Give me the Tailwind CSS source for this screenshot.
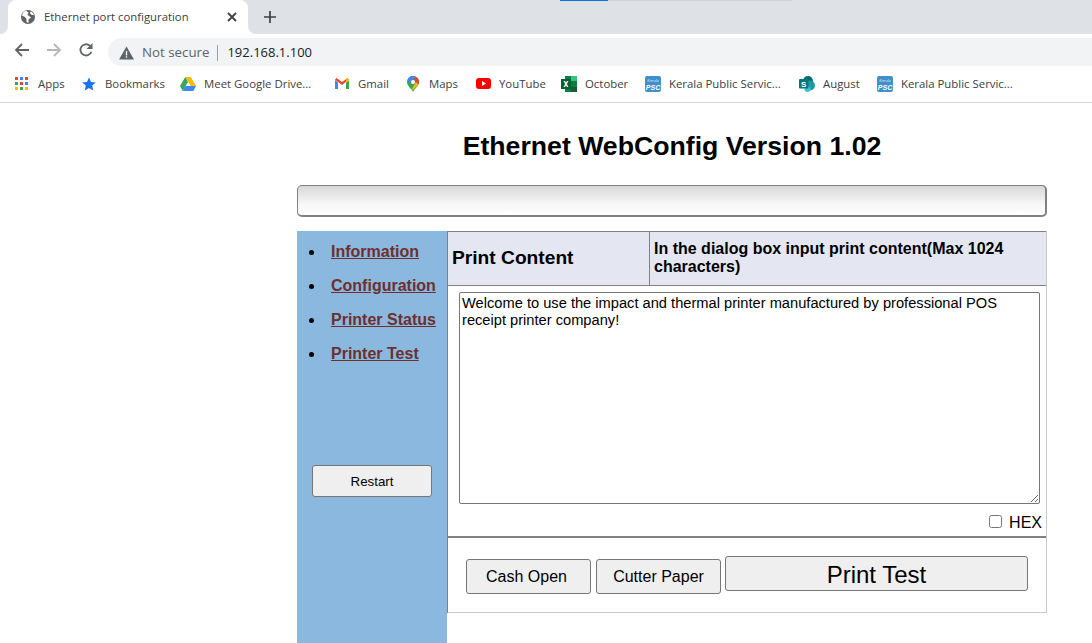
<!DOCTYPE html>
<html lang="en">

<head>
  <meta charset="UTF-8">
  <script src="https://cdn.jsdelivr.net/npm/@tailwindcss/browser@4"></script>
  <title>Ethernet port configuration</title>
</head>

<body class="bg-white h-[643px] overflow-hidden font-['Liberation_Sans',sans-serif] text-black">
  <!-- browser chrome -->
  <div class="font-['Open_Sans',sans-serif]">
    <div class="relative h-[34px] bg-[#dee1e6] flex items-end">
      <div class="absolute top-0 left-[560px] w-[48px] h-px bg-[#0a73d9]"></div>
      <div class="absolute top-0 left-[608px] w-[184px] h-px bg-[#d0d2d6]"></div>
      <!-- tab flares -->
      <div class="absolute bottom-0 left-0 w-2 h-2 bg-white"><div class="w-2 h-2 bg-[#dee1e6] rounded-br-lg"></div></div>
      <div class="absolute bottom-0 left-[248px] w-2 h-2 bg-white"><div class="w-2 h-2 bg-[#dee1e6] rounded-bl-lg"></div></div>
      <div class="ml-2 w-[240px] h-[34px] bg-white rounded-t-lg flex items-center pl-3 pr-[10px]">
        <svg class="w-4 h-4 shrink-0 mr-2" viewBox="0 0 16 16"><circle cx="8" cy="8" r="7" fill="#5f6368"/><path d="M2 6.500l3 1.500 1.500 2 0 3 2 1 0-3.500 2.500-2-2-1.500-1.500-1 1-2.500-2-1.500C4.500 1.500 2.500 3.500 2 6.500zM10.500 2.500l-.5 2 2 1.500 2 0C13.500 4.500 12.500 3 10.500 2.500z" fill="#fff"/></svg>
        <span class="text-[11.350px] text-[#3c4043] whitespace-nowrap flex-1">Ethernet port configuration</span>
        <svg class="w-3 h-3" viewBox="0 0 12 12"><path d="M2 2l8 8M10 2l-8 8" stroke="#3c4043" stroke-width="1.800" fill="none"/></svg>
      </div>
      <svg class="w-3 h-3 ml-[16px] mb-[11px]" viewBox="0 0 12 12"><path d="M6 0v12M0 6h12" stroke="#3c4043" stroke-width="1.700" fill="none"/></svg>
    </div>
    <div class="h-[32px] bg-white flex items-end">
      <div class="w-[108px] h-[32px] flex items-center pl-[14px] gap-[16px]">
        <svg class="w-4 h-4 shrink-0" viewBox="0 0 16 16"><path d="M15 8H2.500M8 2L2 8l6 6" stroke="#5f6368" stroke-width="1.800" fill="none"/></svg>
        <svg class="w-4 h-4 shrink-0" viewBox="0 0 16 16"><path d="M1 8h12.500M8 2l6 6-6 6" stroke="#b5b7ba" stroke-width="1.800" fill="none"/></svg>
        <svg class="w-4 h-4 shrink-0" viewBox="0 0 16 16"><path d="M13.300 9.800A5.600 5.600 0 1 1 12 3.900" stroke="#5f6368" stroke-width="1.800" fill="none"/><path d="M14.500 1v6h-6z" fill="#5f6368"/></svg>
      </div>
      <div class="flex-1 h-[28px] bg-[#f1f3f4] rounded-l-[14px] flex items-center pl-[11px] pt-px">
        <svg class="w-[15px] h-[14px] shrink-0" viewBox="0 0 15 14"><path d="M7.500 0.500L15 13.500H0z" fill="#5f6368"/><path d="M6.800 5h1.400v4.500H6.800zM6.800 10.300h1.400v1.500H6.800z" fill="#f1f3f4"/></svg>
        <span class="ml-2 text-[13.300px] text-[#5f6368]">Not secure</span>
        <span class="ml-[8px] w-px h-4 bg-[#9aa0a6]"></span>
        <span class="ml-[9px] text-[13px] text-[#202124]">192.168.1.100</span>
      </div>
    </div>
    <div class="h-[37px] bg-white border-b border-[#d6d7d9] flex items-center text-[11.400px] text-[#3c4043] whitespace-nowrap pl-[15px]">
      <span class="flex items-center w-[67px]">
        <svg class="w-[13px] h-[13px] mr-[10px]" viewBox="0 0 13 13">
          <rect x="0" y="0" width="3" height="3" fill="#ea4335"/><rect x="5" y="0" width="3" height="3" fill="#4285f4"/><rect x="10" y="0" width="3" height="3" fill="#ea4335"/>
          <rect x="0" y="5" width="3" height="3" fill="#34a853"/><rect x="5" y="5" width="3" height="3" fill="#ea4335"/><rect x="10" y="5" width="3" height="3" fill="#4285f4"/>
          <rect x="0" y="10" width="3" height="3" fill="#fbbc05"/><rect x="5" y="10" width="3" height="3" fill="#34a853"/><rect x="10" y="10" width="3" height="3" fill="#fbbc05"/>
        </svg>Apps</span>
      <span class="flex items-center w-[98px]">
        <svg class="w-[14px] h-[14px] mr-[9px]" viewBox="0 0 14 14"><path d="M7 0.500l2 4.500 4.800.400-3.600 3.200 1.100 4.800L7 10.900l-4.300 2.500 1.100-4.800L.200 5.400 5 5z" fill="#1a73e8"/></svg>Bookmarks</span>
      <span class="flex items-center w-[155px]">
        <svg class="w-4 h-[14px] mr-2" viewBox="0 0 16 14"><path d="M5.300 0h5.400l5.300 9h-5.300z" fill="#fbbc05"/><path d="M5.300 0L0 9l2.700 5 5.300-9z" fill="#34a853"/><path d="M2.700 14h10.600l2.700-5H5.400z" fill="#4285f4"/></svg>Meet Google Drive...</span>
      <span class="flex items-center w-[72px]">
        <svg class="w-[14px] h-[11px] mr-[9px]" viewBox="0 0 14 11"><path d="M0 2v9h3V4z" fill="#4285f4"/><path d="M14 2v9h-3V4z" fill="#34a853"/><path d="M0 1.500L7 7l7-5.500L12.500 0 7 4 1.500 0z" fill="#ea4335"/><path d="M11 1.500L12.500 0 14 1.500V3l-3 2z" fill="#fbbc05"/></svg>Gmail</span>
      <span class="flex items-center w-[69px]">
        <svg class="w-[12px] h-4 mr-[10px]" viewBox="0 0 12 16"><path d="M6 0a6 6 0 0 1 6 6c0 4-4 6-6 10C4 12 0 10 0 6a6 6 0 0 1 6-6z" fill="#34a853"/><path d="M1.500 2a6 6 0 0 1 7-1.500L2.800 7 .5 4z" fill="#4285f4"/><path d="M8.500.5A6 6 0 0 1 12 6c0 1-.3 1.800-.7 2.500L6 6z" fill="#ea4335"/><path d="M11.300 8.500L5.500 14.500 5 13l4-7z" fill="#fbbc05"/><circle cx="6" cy="6" r="2" fill="#fff"/></svg>Maps</span>
      <span class="flex items-center w-[85px]">
        <svg class="w-[15px] h-[11px] mr-[8px]" viewBox="0 0 15 11"><rect width="15" height="11" rx="3" fill="#f00"/><path d="M6 3l4 2.500L6 8z" fill="#fff"/></svg>YouTube</span>
      <span class="flex items-center w-[84px]">
        <svg class="w-4 h-4 mr-[8px]" viewBox="0 0 16 16"><rect x="4" y="0" width="12" height="16" fill="#107c41"/><rect x="10" y="0" width="6" height="5" fill="#33c481"/><rect x="10" y="11" width="6" height="5" fill="#185c37"/><rect x="0" y="3" width="10" height="10" fill="#0b5f33"/><path d="M2.500 5h1.500l1 1.800L6 5h1.500L5.800 8l1.700 3H6L5 9.200 4 11H2.500L4.200 8z" fill="#fff"/></svg>October</span>
      <span class="flex items-center w-[154px]">
        <svg class="w-4 h-4 mr-2" viewBox="0 0 16 16"><rect width="16" height="16" rx="2" fill="#3f8fc9"/><text x="8" y="5.500" font-size="4" fill="#dbeaf6" text-anchor="middle" font-family="Liberation Sans" font-style="italic">Kerala</text><text x="8" y="13.500" font-size="7" font-weight="700" fill="#fff" text-anchor="middle" font-family="Liberation Sans" font-style="italic">PSC</text></svg>Kerala Public Servic...</span>
      <span class="flex items-center w-[78px]">
        <svg class="w-4 h-4 mr-2" viewBox="0 0 16 16"><circle cx="9" cy="5" r="5" fill="#036c70"/><circle cx="11" cy="9.500" r="5" fill="#1a9ba1"/><circle cx="8.500" cy="13" r="3" fill="#37c6d0"/><rect x="0" y="3" width="9.500" height="9.500" rx="1" fill="#03787c"/><text x="4.700" y="10.500" font-size="8" font-weight="700" fill="#fff" text-anchor="middle" font-family="Liberation Sans">S</text></svg>August</span>
      <span class="flex items-center">
        <svg class="w-4 h-4 mr-2" viewBox="0 0 16 16"><rect width="16" height="16" rx="2" fill="#3f8fc9"/><text x="8" y="5.500" font-size="4" fill="#dbeaf6" text-anchor="middle" font-family="Liberation Sans" font-style="italic">Kerala</text><text x="8" y="13.500" font-size="7" font-weight="700" fill="#fff" text-anchor="middle" font-family="Liberation Sans" font-style="italic">PSC</text></svg>Kerala Public Servic...</span>
    </div>
  </div>

  <!-- page -->
  <div class="ml-[297px] w-[750px]">
    <h1 class="pt-[27px] h-[82px] text-center text-[26.660px] leading-[32px] font-bold">Ethernet WebConfig Version 1.02</h1>
    <div class="h-[32px] rounded-[5px] border border-[#808080] border-r-2 border-b-2 bg-gradient-to-b from-[#d8d8d8] via-[#f6f6f6] via-60% to-white"></div>

    <div class="mt-[14px] flex h-[412px]">
      <!-- sidebar -->
      <div class="w-[150px] bg-[#8bb8de]">
        <ul class="pl-[12px] pt-[4px] text-[16px] font-bold">
          <li class="h-[34px] flex items-center"><span class="w-[5px] h-[5px] rounded-full bg-black mr-[17px]"></span><a href="#" class="text-[#6e2f2f] underline">Information</a></li>
          <li class="h-[34px] flex items-center"><span class="w-[5px] h-[5px] rounded-full bg-black mr-[17px]"></span><a href="#" class="text-[#6e2f2f] underline">Configuration</a></li>
          <li class="h-[34px] flex items-center"><span class="w-[5px] h-[5px] rounded-full bg-black mr-[17px]"></span><a href="#" class="text-[#6e2f2f] underline">Printer Status</a></li>
          <li class="h-[34px] flex items-center"><span class="w-[5px] h-[5px] rounded-full bg-black mr-[17px]"></span><a href="#" class="text-[#6e2f2f] underline">Printer Test</a></li>
        </ul>
        <button class="block mt-[94px] ml-[15px] w-[120px] h-[32px] pt-px bg-[#efefef] border border-[#767676] rounded-[3px] text-[13.330px]">Restart</button>
      </div>

      <!-- content -->
      <div class="w-[600px]">
        <div class="border-l border-[#808080] border-r border-r-[#c8c8c8]">
          <div class="flex h-[55px] bg-[#e4e7f1] border-t border-b border-[#808080]">
            <div class="w-[202px] flex items-center pl-1 text-[19.200px] font-bold border-r border-[#808080]">Print Content</div>
            <div class="flex-1 flex items-center pl-[4px] pb-[2px] text-[16px] leading-[18px] font-bold">In the dialog box input print content(Max 1024 characters)</div>
          </div>
          <div class="h-[252px] border-b-2 border-[#808080] relative">
            <textarea class="block absolute left-[11px] top-[6px] w-[581px] h-[212px] border border-[#767676] rounded-[2px] px-[2px] py-[2px] text-[14.670px] leading-[17px] outline-none">Welcome to use the impact and thermal printer manufactured by professional POS receipt printer company!</textarea>
            <label class="absolute right-[4px] top-[228px] flex items-center text-[16px] leading-[18px]"><input type="checkbox" class="w-[13px] h-[13px] mr-[7px] mb-[4px] appearance-auto">HEX</label>
          </div>
          <div class="h-[75px] flex items-start border-b border-b-[#c8c8c8] pl-[18px] pt-[18px]">
            <button class="mt-[3px] w-[125px] h-[35px] pr-1 bg-[#efefef] border border-[#767676] rounded-[3px] text-[16px]">Cash Open</button>
            <button class="mt-[3px] ml-[5px] w-[125px] h-[35px] bg-[#efefef] border border-[#767676] rounded-[3px] text-[16px]">Cutter Paper</button>
            <button class="ml-[4px] w-[303px] h-[35px] bg-[#efefef] border border-[#767676] rounded-[3px] text-[24px]">Print Test</button>
          </div>
        </div>
      </div>
    </div>
  </div>
</body>

</html>
